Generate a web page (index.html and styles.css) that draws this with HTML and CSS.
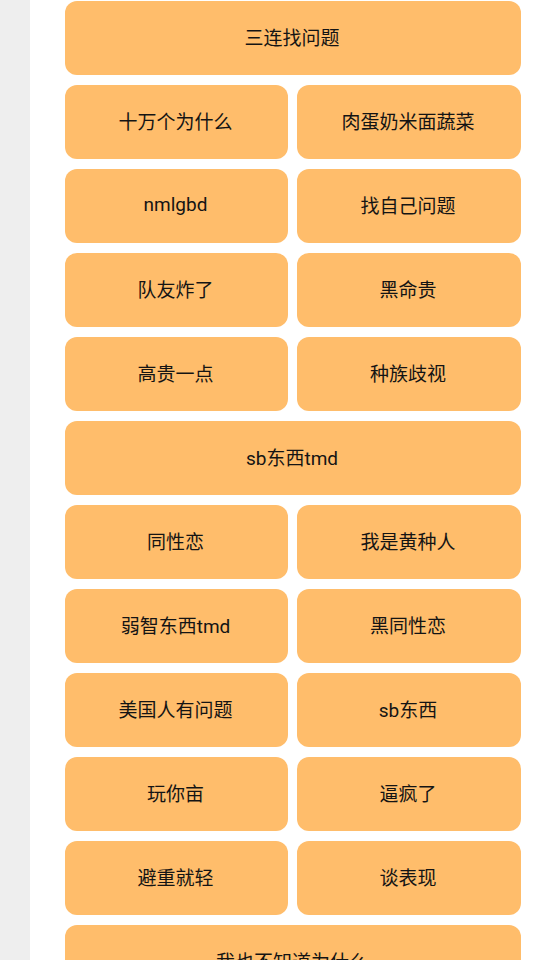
FILE: index.html
```html
<!DOCTYPE html>
<html lang="zh">
<head>
  <meta charset="UTF-8">
  <title>按钮</title>
  <link rel="stylesheet" href="styles.css">
</head>
<body>
  <div class="side"></div>
  <div class="main">
    <div class="grid">
      <button class="btn wide">三连找问题</button>
      <button class="btn">十万个为什么</button>
      <button class="btn">肉蛋奶米面蔬菜</button>
      <button class="btn">nmlgbd</button>
      <button class="btn">找自己问题</button>
      <button class="btn">队友炸了</button>
      <button class="btn">黑命贵</button>
      <button class="btn">高贵一点</button>
      <button class="btn">种族歧视</button>
      <button class="btn wide">sb东西tmd</button>
      <button class="btn">同性恋</button>
      <button class="btn">我是黄种人</button>
      <button class="btn">弱智东西tmd</button>
      <button class="btn">黑同性恋</button>
      <button class="btn">美国人有问题</button>
      <button class="btn">sb东西</button>
      <button class="btn">玩你亩</button>
      <button class="btn">逼疯了</button>
      <button class="btn">避重就轻</button>
      <button class="btn">谈表现</button>
      <button class="btn wide">我也不知道为什么</button>
    </div>
  </div>
</body>
</html>
```

FILE: styles.css
```css
html, body {
  margin: 0;
  padding: 0;
  height: 100%;
  overflow: hidden;
}
body {
  display: flex;
  background: #fff;
  font-family: Roboto, "Noto Sans CJK SC", sans-serif;
}
.side {
  width: 30px;
  flex: none;
  background: #eeeeee;
}
.main {
  flex: 1;
  padding: 1px 19px 0 35px;
}
.grid {
  display: grid;
  grid-template-columns: 223px 1fr;
  gap: 10px 9px;
}
.btn {
  height: 74px;
  border: none;
  border-radius: 12px;
  background: #ffbd6b;
  color: #141414;
  font-family: inherit;
  font-size: 19px;
  padding: 0 2px 4px 0;
}
.wide {
  grid-column: 1 / 3;
}
```
